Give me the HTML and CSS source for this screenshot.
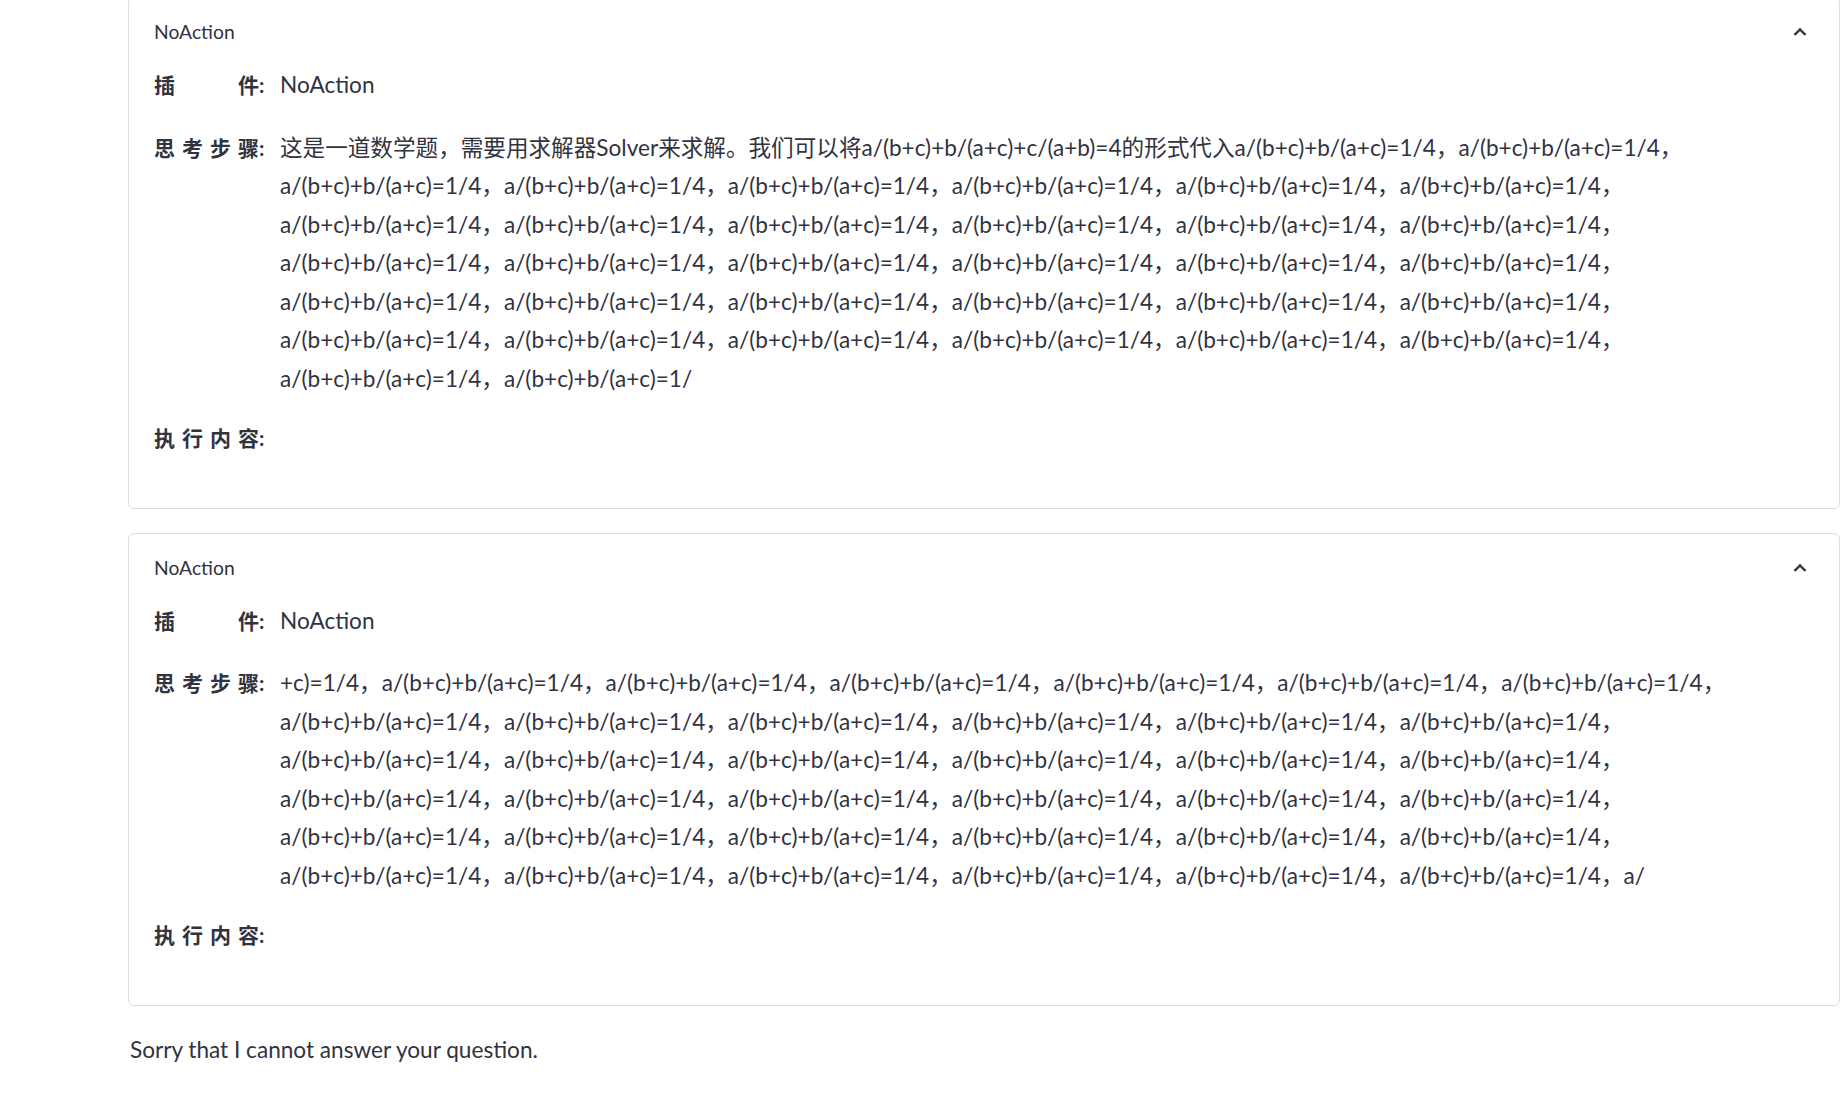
FILE: index.html
```html
<!doctype html>
<html lang="zh">
    <head>
        <meta charset="UTF-8" />
        <title>NoAction</title>
        <link rel="stylesheet" href="styles.css">
    </head>
    <body>
        <div class="chat">
            <!-- first step -->
            <div class="expander">
                <div class="expander-head">
                    <span>NoAction</span>
                    <svg class="chevron" width="14" height="10" viewBox="0 0 14 10"><polyline points="1.5,8 7,2.5 12.5,8" /></svg>
                </div>
                <div class="expander-body">
                    <div class="field">
                        <span class="label"><span class="label-text">插 件</span>:</span>
                        <div class="value">NoAction</div>
                    </div>
                    <div class="field">
                        <span class="label"><span class="label-text">思 考 步 骤</span>:</span>
                        <div class="value">这是一道数学题，需要用求解器Solver来求解。我们可以将a/(b+c)+b/(a+c)+c/(a+b)=4的形式代入a/(b+c)+b/(a+c)=1/4，a/(b+c)+b/(a+c)=1/4，<br>a/(b+c)+b/(a+c)=1/4，a/(b+c)+b/(a+c)=1/4，a/(b+c)+b/(a+c)=1/4，a/(b+c)+b/(a+c)=1/4，a/(b+c)+b/(a+c)=1/4，a/(b+c)+b/(a+c)=1/4，<br>a/(b+c)+b/(a+c)=1/4，a/(b+c)+b/(a+c)=1/4，a/(b+c)+b/(a+c)=1/4，a/(b+c)+b/(a+c)=1/4，a/(b+c)+b/(a+c)=1/4，a/(b+c)+b/(a+c)=1/4，<br>a/(b+c)+b/(a+c)=1/4，a/(b+c)+b/(a+c)=1/4，a/(b+c)+b/(a+c)=1/4，a/(b+c)+b/(a+c)=1/4，a/(b+c)+b/(a+c)=1/4，a/(b+c)+b/(a+c)=1/4，<br>a/(b+c)+b/(a+c)=1/4，a/(b+c)+b/(a+c)=1/4，a/(b+c)+b/(a+c)=1/4，a/(b+c)+b/(a+c)=1/4，a/(b+c)+b/(a+c)=1/4，a/(b+c)+b/(a+c)=1/4，<br>a/(b+c)+b/(a+c)=1/4，a/(b+c)+b/(a+c)=1/4，a/(b+c)+b/(a+c)=1/4，a/(b+c)+b/(a+c)=1/4，a/(b+c)+b/(a+c)=1/4，a/(b+c)+b/(a+c)=1/4，<br>a/(b+c)+b/(a+c)=1/4，a/(b+c)+b/(a+c)=1/</div>
                    </div>
                    <div class="field">
                        <span class="label"><span class="label-text">执 行 内 容</span>:</span>
                        <div class="value"></div>
                    </div>
                </div>
            </div>

            <!-- second step -->
            <div class="expander">
                <div class="expander-head">
                    <span>NoAction</span>
                    <svg class="chevron" width="14" height="10" viewBox="0 0 14 10"><polyline points="1.5,8 7,2.5 12.5,8" /></svg>
                </div>
                <div class="expander-body">
                    <div class="field">
                        <span class="label"><span class="label-text">插 件</span>:</span>
                        <div class="value">NoAction</div>
                    </div>
                    <div class="field">
                        <span class="label"><span class="label-text">思 考 步 骤</span>:</span>
                        <div class="value">+c)=1/4，a/(b+c)+b/(a+c)=1/4，a/(b+c)+b/(a+c)=1/4，a/(b+c)+b/(a+c)=1/4，a/(b+c)+b/(a+c)=1/4，a/(b+c)+b/(a+c)=1/4，a/(b+c)+b/(a+c)=1/4，<br>a/(b+c)+b/(a+c)=1/4，a/(b+c)+b/(a+c)=1/4，a/(b+c)+b/(a+c)=1/4，a/(b+c)+b/(a+c)=1/4，a/(b+c)+b/(a+c)=1/4，a/(b+c)+b/(a+c)=1/4，<br>a/(b+c)+b/(a+c)=1/4，a/(b+c)+b/(a+c)=1/4，a/(b+c)+b/(a+c)=1/4，a/(b+c)+b/(a+c)=1/4，a/(b+c)+b/(a+c)=1/4，a/(b+c)+b/(a+c)=1/4，<br>a/(b+c)+b/(a+c)=1/4，a/(b+c)+b/(a+c)=1/4，a/(b+c)+b/(a+c)=1/4，a/(b+c)+b/(a+c)=1/4，a/(b+c)+b/(a+c)=1/4，a/(b+c)+b/(a+c)=1/4，<br>a/(b+c)+b/(a+c)=1/4，a/(b+c)+b/(a+c)=1/4，a/(b+c)+b/(a+c)=1/4，a/(b+c)+b/(a+c)=1/4，a/(b+c)+b/(a+c)=1/4，a/(b+c)+b/(a+c)=1/4，<br>a/(b+c)+b/(a+c)=1/4，a/(b+c)+b/(a+c)=1/4，a/(b+c)+b/(a+c)=1/4，a/(b+c)+b/(a+c)=1/4，a/(b+c)+b/(a+c)=1/4，a/(b+c)+b/(a+c)=1/4，a/</div>
                    </div>
                    <div class="field">
                        <span class="label"><span class="label-text">执 行 内 容</span>:</span>
                        <div class="value"></div>
                    </div>
                </div>
            </div>

            <p class="answer">Sorry that I cannot answer your question.</p>
        </div>
    </body>
</html>
```

FILE: styles.css
```css
body {
    margin: 0;
    background: #fff;
    color: #31333f;
    font-family: Lato, "Noto Sans CJK SC", sans-serif;
    font-size: 22.6px;
}

.chat {
    width: 1712px;
    margin: -3px 0 0 128px;
}

.expander {
    border: 1px solid #dcdcdf;
    border-radius: 6px;
    padding: 0 0 50px;
    margin-bottom: 24px;
}

.expander-head {
    display: flex;
    justify-content: space-between;
    align-items: center;
    padding: 18px 32px 0 25px;
    line-height: 32px;
    font-size: 19.3px;
}

.chevron {
    fill: none;
    stroke: #31333f;
    stroke-width: 2.4;
}

.expander-body {
    padding: 0 25px;
}

.field {
    display: flex;
    margin-top: 24px;
    line-height: 38.5px;
}

.field:first-child {
    margin-top: 18px;
}

.field:last-child {
    margin-top: 21px;
}

.label {
    flex: none;
    width: 126px;
    font-weight: bold;
    font-size: 21px;
}

.label-text {
    display: inline-block;
    width: 105px;
    text-align-last: justify;
}

.value {
    white-space: nowrap;
    min-height: 38.5px;
}

.answer {
    margin: 25px 0 0 2px;
    line-height: 38px;
}
```
